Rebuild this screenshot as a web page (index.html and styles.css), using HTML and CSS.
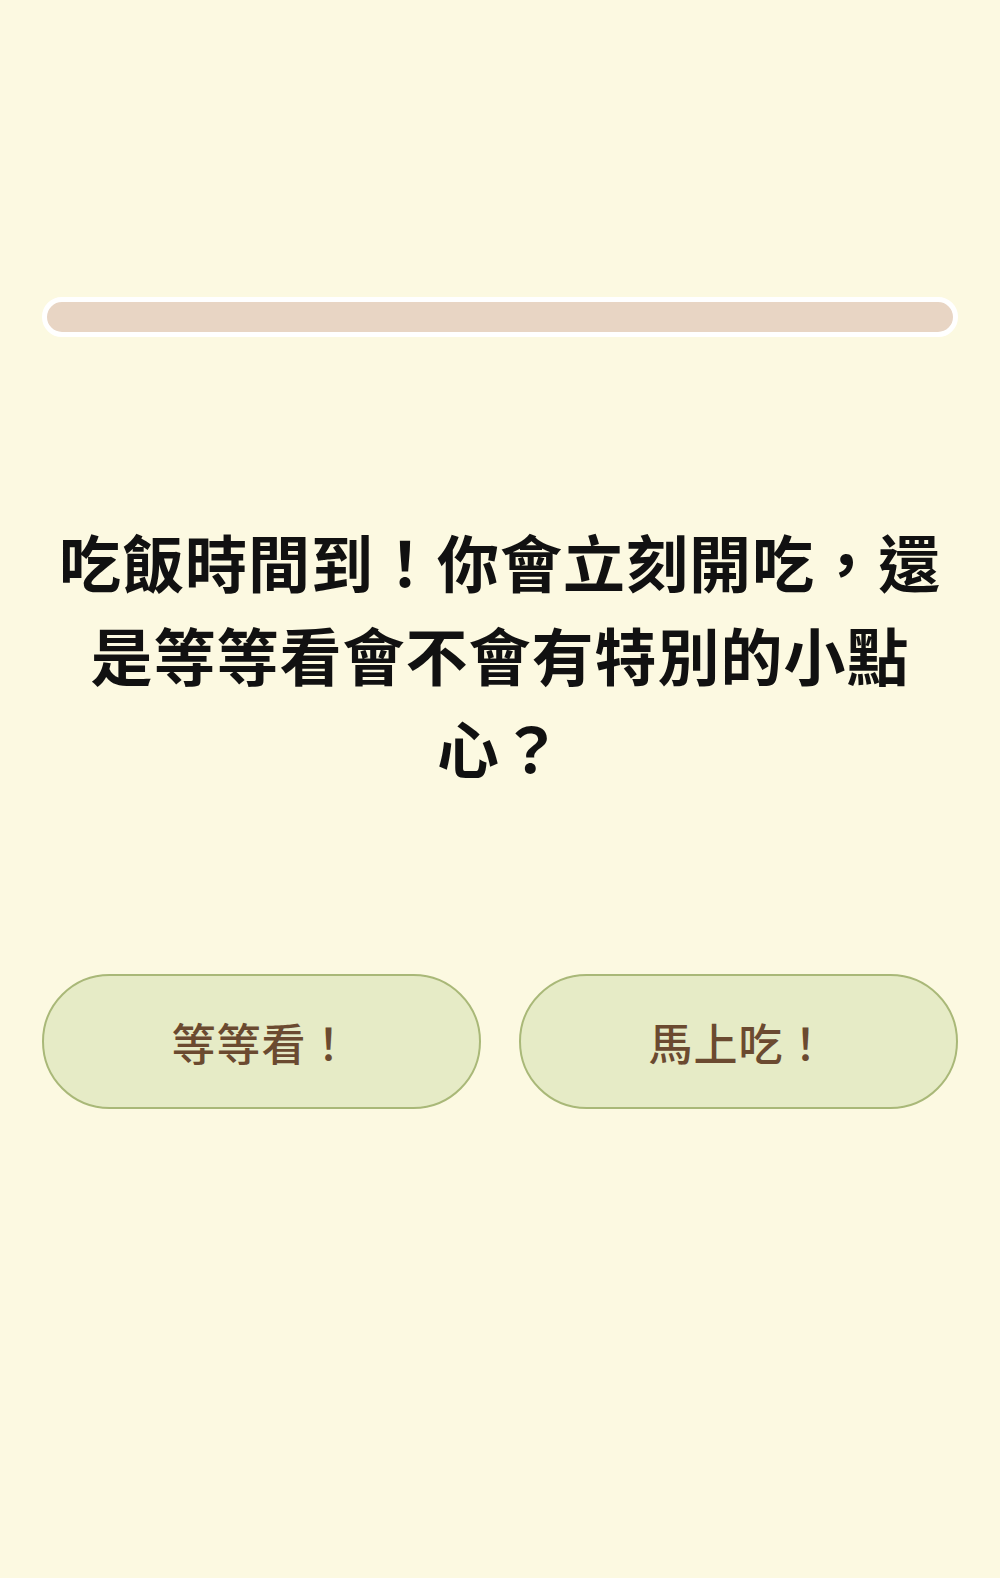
FILE: index.html
```html
<!DOCTYPE html>
<html lang="zh-Hant">
<head>
<meta charset="utf-8">
<title>Quiz</title>
<link rel="stylesheet" href="styles.css">
</head>
<body>
<main class="quiz">
  <div class="progress"><div class="progress-fill"></div></div>
  <h1 class="question">吃飯時間到！你會立刻開吃，還是等等看會不會有特別的小點心？</h1>
  <div class="options">
    <button class="option">等等看！</button>
    <button class="option">馬上吃！</button>
  </div>
</main>
</body>
</html>
```

FILE: styles.css
```css
html, body {
  margin: 0;
  padding: 0;
  background: #fcf9e1;
}
body {
  font-family: "Noto Sans CJK TC", "Noto Sans", sans-serif;
  min-height: 1578px;
}
.quiz {
  padding: 297px 42px 0;
  display: flex;
  flex-direction: column;
}
.progress {
  height: 30px;
  border: 5px solid #ffffff;
  border-radius: 20px;
  background: #e8d5c4;
  overflow: hidden;
}
.progress-fill {
  width: 0;
  height: 100%;
}
.question {
  margin: 178px 0 0;
  font-size: 62px;
  line-height: 93px;
  font-weight: 700;
  letter-spacing: 1px;
  color: #111111;
  text-align: center;
}
.options {
  margin-top: 180px;
  display: grid;
  grid-template-columns: 1fr 1fr;
  gap: 38px;
}
.option {
  height: 135px;
  border: 2px solid #a9b878;
  border-radius: 68px;
  background: #e6ebc6;
  color: #6b4a30;
  font-family: "Noto Sans CJK TC", "Noto Sans", sans-serif;
  font-size: 44px;
  font-weight: 500;
  letter-spacing: 1px;
  padding: 0;
}
```
